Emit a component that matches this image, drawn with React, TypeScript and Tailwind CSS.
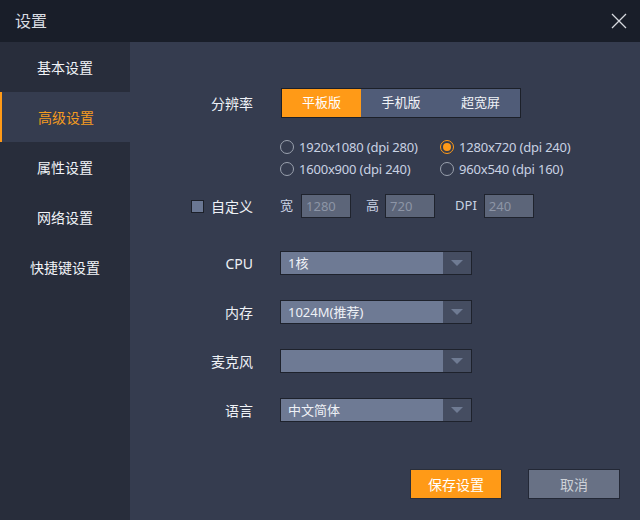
import React from "react";

const font = { fontFamily: '"Noto Sans", "Noto Sans CJK SC", sans-serif' };

function Radio({ checked, label }: { checked?: boolean; label: string }) {
  return (
    <div className="flex items-center h-[22px] w-[160px]">
      <span
        className={
          "w-[14px] h-[14px] rounded-full border flex items-center justify-center shrink-0 " +
          (checked ? "border-[#ff9a17]" : "border-[#9aa1ae]")
        }
      >
        {checked && <span className="w-[8px] h-[8px] rounded-full bg-[#ff9a17]" />}
      </span>
      <span className="ml-[5px] text-[13px] tracking-[-0.2px] text-[#c9d2e3] leading-none">{label}</span>
    </div>
  );
}

function Select({ label, value }: { label: string; value: string }) {
  return (
    <div className="flex items-center h-[24px]">
      <div className="w-[123px] text-right text-[14px] text-[#eef1f6]">{label}</div>
      <div className="ml-[27px] w-[192px] h-[24px] flex border border-[#1e222c] bg-[#6e7a94]">
        <div className="flex-1 pl-[7px] text-[13px] text-[#eef1f6] leading-[22px]">{value}</div>
        <div className="w-[28px] bg-[#454d61] flex items-center justify-center">
          <svg width="12" height="7" viewBox="0 0 12 7">
            <path d="M0 0 L12 0 L6 6 Z" fill="#6f7b93" />
          </svg>
        </div>
      </div>
    </div>
  );
}

function SmallInput({ value }: { value: string }) {
  return (
    <div className="w-[50px] h-[24px] border border-[#1f232d] bg-[#5c6579] text-[13px] text-[#8d95a6] pl-[4px] leading-[22px]">
      {value}
    </div>
  );
}

export default function App() {
  const items = ["基本设置", "高级设置", "属性设置", "网络设置", "快捷键设置"];
  return (
    <div className="w-[640px] h-[520px] flex flex-col bg-[#353c4f] overflow-hidden" style={font}>
      <div className="h-[42px] bg-[#191e29] flex items-center justify-between pl-[15px] pr-[13px] shrink-0">
        <span className="text-[16px] text-[#d9dce2]">设置</span>
        <svg width="16" height="16" viewBox="0 0 16 16">
          <path d="M1 1 L15 15 M15 1 L1 15" stroke="#d6d9df" strokeWidth="1.3" />
        </svg>
      </div>
      <div className="flex flex-1">
        <div className="w-[130px] bg-[#282d3b] flex flex-col">
          {items.map((t, i) => (
            <div
              key={t}
              className={
                "h-[50px] flex items-center justify-center text-[14px] " +
                (i === 1
                  ? "bg-[#353c4f] text-[#f49b20] border-l-2 border-[#ff9a17]"
                  : "text-[#f1f3f7]")
              }
            >
              {t}
            </div>
          ))}
        </div>
        <div className="flex-1 flex flex-col pt-[46px]">
          <div className="flex items-center h-[30px]">
            <div className="w-[123px] text-right text-[14px] text-[#eef1f6]">分辨率</div>
            <div className="ml-[28px] flex border border-[#1c2029] h-[30px]">
              <div className="w-[79px] bg-[#ff9a17] text-white text-[13px] flex items-center justify-center">平板版</div>
              <div className="w-[80px] bg-[#505c78] text-[#f1f3f7] text-[13px] flex items-center justify-center">手机版</div>
              <div className="w-[79px] bg-[#505c78] text-[#f1f3f7] text-[13px] flex items-center justify-center">超宽屏</div>
            </div>
          </div>
          <div className="ml-[150px] mt-[18px] grid grid-cols-[160px_160px]">
            <Radio label="1920x1080 (dpi 280)" />
            <Radio checked label="1280x720 (dpi 240)" />
            <Radio label="1600x900 (dpi 240)" />
            <Radio label="960x540 (dpi 160)" />
          </div>
          <div className="mt-[14px] flex items-center h-[24px] pl-[61px]">
            <span className="w-[13px] h-[13px] bg-[#6a7793] border border-[#1c2029]" />
            <span className="ml-[7px] text-[14px] text-[#eef1f6]">自定义</span>
            <span className="ml-[27px] text-[13px] text-[#c9d2e3]">宽</span>
            <span className="ml-[8px]"><SmallInput value="1280" /></span>
            <span className="ml-[15px] text-[13px] text-[#c9d2e3]">高</span>
            <span className="ml-[6px]"><SmallInput value="720" /></span>
            <span className="ml-[20px] text-[13px] text-[#c9d2e3]">DPI</span>
            <span className="ml-[7px]"><SmallInput value="240" /></span>
          </div>
          <div className="mt-[33px] flex flex-col gap-[25px]">
            <Select label="CPU" value="1核" />
            <Select label="内存" value="1024M(推荐)" />
            <Select label="麦克风" value="" />
            <Select label="语言" value="中文简体" />
          </div>
          <div className="mt-[47px] flex pl-[280px] gap-[26px]">
            <button className="w-[92px] h-[30px] bg-[#ff9a17] border border-[#2a2f3b] text-white text-[14px]">保存设置</button>
            <button className="w-[92px] h-[30px] bg-[#687185] border border-[#232836] text-[#cdd1d8] text-[14px]">取消</button>
          </div>
        </div>
      </div>
    </div>
  );
}
